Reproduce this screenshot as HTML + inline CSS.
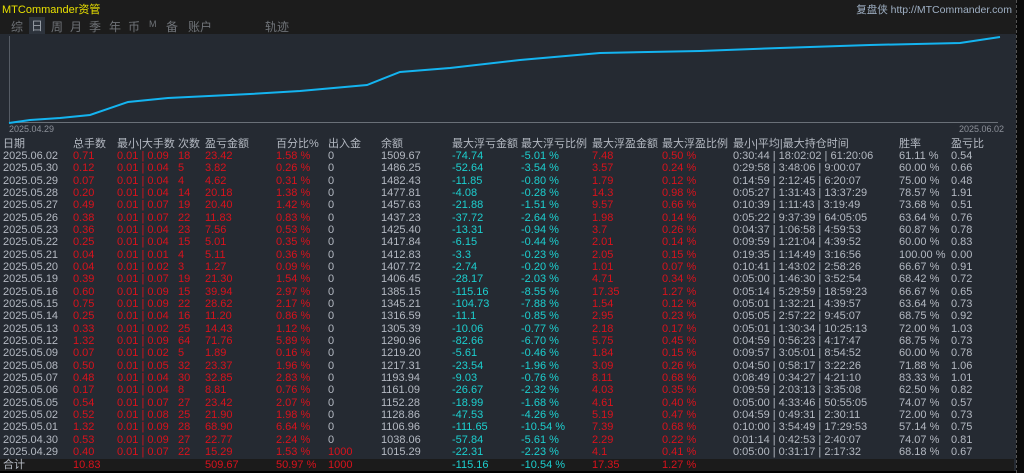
<!DOCTYPE html>
<html><head><meta charset="utf-8"><style>
*{margin:0;padding:0;box-sizing:border-box}
body{width:1024px;height:473px;overflow:hidden;background:#252a32;font-family:"Liberation Sans","Noto Sans CJK SC",sans-serif;font-size:11px;color:#b4b9c2;position:relative}
.top{position:absolute;left:0;top:0;width:1024px;height:34px;background:#1c1c1c}
.logo{position:absolute;left:2px;top:1px;font-size:11px;color:#e8e000}
.site{position:absolute;right:12px;top:2px;font-size:10.5px;color:#9fb0c4}
.tabs{position:absolute;left:11px;top:18px;font-size:12px;color:#6f7378}
.tabs span{position:absolute;top:0;white-space:nowrap}
.sel{background:#2d333c;color:#9aa0a8;padding:0 2px}
.strip{position:absolute;right:0;top:0;width:8px;height:473px;background:#0a0a0a;border-left:1px dashed #555}
.r{position:absolute;left:0;width:1014px;height:12px;line-height:12px;white-space:nowrap}
.r span{position:absolute;top:0}
.h{color:#b4b9c2;font-size:11px}
.red{color:#d9121c}.cy{color:#1ccfcf}
.tot{position:absolute;left:0;top:459px;width:1014px;height:12px;background:#1b1b1b}
.bot{position:absolute;left:0;top:471px;width:1016px;height:2px;background:#000}
</style></head><body>
<div class="top">
<div class="logo">MTCommander资管</div>
<div class="site">复盘侠 http://MTCommander.com</div>
<div class="tabs">
<span style="left:0">综</span><span class="sel" style="left:18px;top:-1px">日</span><span style="left:40px">周</span><span style="left:59px">月</span><span style="left:78px">季</span><span style="left:98px">年</span><span style="left:117px">币</span><span style="left:138px;font-size:9px;top:1px">M</span><span style="left:155px">备</span><span style="left:177px">账户</span><span style="left:254px">轨迹</span>
</div>
</div>
<svg style="position:absolute;left:0;top:34px" width="1016" height="100">
<line x1="9.5" y1="2" x2="9.5" y2="88" stroke="#555b64"/>
<line x1="9" y1="88.5" x2="998" y2="88.5" stroke="#6a7078"/>
<polyline fill="none" stroke="#14b4f0" stroke-width="2" points="9,89 30,86 60,84 90,81 128,68 168,64 250,60 300,57 367,51 400,38 450,34 520,26 600,19 700,17 780,14 870,11 960,9 1000,3"/>
</svg>
<div style="position:absolute;left:9px;top:124px;font-size:9px;color:#8c9099">2025.04.29</div>
<div style="position:absolute;left:959px;top:124px;font-size:9px;color:#8c9099">2025.06.02</div>

<div class="r h" style="top:138px"><span style="left:3px">日期</span><span style="left:73px">总手数</span><span style="left:117px">最小|大手数</span><span style="left:178px">次数</span><span style="left:205px">盈亏金额</span><span style="left:276px">百分比%</span><span style="left:328px">出入金</span><span style="left:381px">余额</span><span style="left:452px">最大浮亏金额</span><span style="left:521px">最大浮亏比例</span><span style="left:592px">最大浮盈金额</span><span style="left:662px">最大浮盈比例</span><span style="left:733px">最小|平均|最大持仓时间</span><span style="left:899px">胜率</span><span style="left:951px">盈亏比</span></div>

<div id="rows">
<div class="r" style="top:150px"><span style="left:3px">2025.06.02</span><span class="red" style="left:73px">0.71</span><span class="red" style="left:117px">0.01 | 0.09</span><span class="red" style="left:178px">18</span><span class="red" style="left:205px">23.42</span><span class="red" style="left:276px">1.58 %</span><span style="left:328px">0</span><span style="left:381px">1509.67</span><span class="cy" style="left:452px">-74.74</span><span class="cy" style="left:521px">-5.01 %</span><span class="red" style="left:592px">7.48</span><span class="red" style="left:662px">0.50 %</span><span style="left:733px">0:30:44 | 18:02:02 | 61:20:06</span><span style="left:899px">61.11 %</span><span style="left:951px">0.54</span></div>
<div class="r" style="top:162.3px"><span style="left:3px">2025.05.30</span><span class="red" style="left:73px">0.12</span><span class="red" style="left:117px">0.01 | 0.04</span><span class="red" style="left:178px">5</span><span class="red" style="left:205px">3.82</span><span class="red" style="left:276px">0.26 %</span><span style="left:328px">0</span><span style="left:381px">1486.25</span><span class="cy" style="left:452px">-52.64</span><span class="cy" style="left:521px">-3.54 %</span><span class="red" style="left:592px">3.57</span><span class="red" style="left:662px">0.24 %</span><span style="left:733px">0:29:58 | 3:48:06 | 9:00:07</span><span style="left:899px">60.00 %</span><span style="left:951px">0.66</span></div>
<div class="r" style="top:174.7px"><span style="left:3px">2025.05.29</span><span class="red" style="left:73px">0.07</span><span class="red" style="left:117px">0.01 | 0.04</span><span class="red" style="left:178px">4</span><span class="red" style="left:205px">4.62</span><span class="red" style="left:276px">0.31 %</span><span style="left:328px">0</span><span style="left:381px">1482.43</span><span class="cy" style="left:452px">-11.85</span><span class="cy" style="left:521px">-0.80 %</span><span class="red" style="left:592px">1.79</span><span class="red" style="left:662px">0.12 %</span><span style="left:733px">0:14:59 | 2:12:45 | 6:20:07</span><span style="left:899px">75.00 %</span><span style="left:951px">0.48</span></div>
<div class="r" style="top:187px"><span style="left:3px">2025.05.28</span><span class="red" style="left:73px">0.20</span><span class="red" style="left:117px">0.01 | 0.04</span><span class="red" style="left:178px">14</span><span class="red" style="left:205px">20.18</span><span class="red" style="left:276px">1.38 %</span><span style="left:328px">0</span><span style="left:381px">1477.81</span><span class="cy" style="left:452px">-4.08</span><span class="cy" style="left:521px">-0.28 %</span><span class="red" style="left:592px">14.3</span><span class="red" style="left:662px">0.98 %</span><span style="left:733px">0:05:27 | 1:31:43 | 13:37:29</span><span style="left:899px">78.57 %</span><span style="left:951px">1.91</span></div>
<div class="r" style="top:199.3px"><span style="left:3px">2025.05.27</span><span class="red" style="left:73px">0.49</span><span class="red" style="left:117px">0.01 | 0.07</span><span class="red" style="left:178px">19</span><span class="red" style="left:205px">20.40</span><span class="red" style="left:276px">1.42 %</span><span style="left:328px">0</span><span style="left:381px">1457.63</span><span class="cy" style="left:452px">-21.88</span><span class="cy" style="left:521px">-1.51 %</span><span class="red" style="left:592px">9.57</span><span class="red" style="left:662px">0.66 %</span><span style="left:733px">0:10:39 | 1:11:43 | 3:19:49</span><span style="left:899px">73.68 %</span><span style="left:951px">0.51</span></div>
<div class="r" style="top:211.7px"><span style="left:3px">2025.05.26</span><span class="red" style="left:73px">0.38</span><span class="red" style="left:117px">0.01 | 0.07</span><span class="red" style="left:178px">22</span><span class="red" style="left:205px">11.83</span><span class="red" style="left:276px">0.83 %</span><span style="left:328px">0</span><span style="left:381px">1437.23</span><span class="cy" style="left:452px">-37.72</span><span class="cy" style="left:521px">-2.64 %</span><span class="red" style="left:592px">1.98</span><span class="red" style="left:662px">0.14 %</span><span style="left:733px">0:05:22 | 9:37:39 | 64:05:05</span><span style="left:899px">63.64 %</span><span style="left:951px">0.76</span></div>
<div class="r" style="top:224px"><span style="left:3px">2025.05.23</span><span class="red" style="left:73px">0.36</span><span class="red" style="left:117px">0.01 | 0.04</span><span class="red" style="left:178px">23</span><span class="red" style="left:205px">7.56</span><span class="red" style="left:276px">0.53 %</span><span style="left:328px">0</span><span style="left:381px">1425.40</span><span class="cy" style="left:452px">-13.31</span><span class="cy" style="left:521px">-0.94 %</span><span class="red" style="left:592px">3.7</span><span class="red" style="left:662px">0.26 %</span><span style="left:733px">0:04:37 | 1:06:58 | 4:59:53</span><span style="left:899px">60.87 %</span><span style="left:951px">0.78</span></div>
<div class="r" style="top:236.3px"><span style="left:3px">2025.05.22</span><span class="red" style="left:73px">0.25</span><span class="red" style="left:117px">0.01 | 0.04</span><span class="red" style="left:178px">15</span><span class="red" style="left:205px">5.01</span><span class="red" style="left:276px">0.35 %</span><span style="left:328px">0</span><span style="left:381px">1417.84</span><span class="cy" style="left:452px">-6.15</span><span class="cy" style="left:521px">-0.44 %</span><span class="red" style="left:592px">2.01</span><span class="red" style="left:662px">0.14 %</span><span style="left:733px">0:09:59 | 1:21:04 | 4:39:52</span><span style="left:899px">60.00 %</span><span style="left:951px">0.83</span></div>
<div class="r" style="top:248.7px"><span style="left:3px">2025.05.21</span><span class="red" style="left:73px">0.04</span><span class="red" style="left:117px">0.01 | 0.01</span><span class="red" style="left:178px">4</span><span class="red" style="left:205px">5.11</span><span class="red" style="left:276px">0.36 %</span><span style="left:328px">0</span><span style="left:381px">1412.83</span><span class="cy" style="left:452px">-3.3</span><span class="cy" style="left:521px">-0.23 %</span><span class="red" style="left:592px">2.05</span><span class="red" style="left:662px">0.15 %</span><span style="left:733px">0:19:35 | 1:14:49 | 3:16:56</span><span style="left:899px">100.00 %</span><span style="left:951px">0.00</span></div>
<div class="r" style="top:261px"><span style="left:3px">2025.05.20</span><span class="red" style="left:73px">0.04</span><span class="red" style="left:117px">0.01 | 0.02</span><span class="red" style="left:178px">3</span><span class="red" style="left:205px">1.27</span><span class="red" style="left:276px">0.09 %</span><span style="left:328px">0</span><span style="left:381px">1407.72</span><span class="cy" style="left:452px">-2.74</span><span class="cy" style="left:521px">-0.20 %</span><span class="red" style="left:592px">1.01</span><span class="red" style="left:662px">0.07 %</span><span style="left:733px">0:10:41 | 1:43:02 | 2:58:26</span><span style="left:899px">66.67 %</span><span style="left:951px">0.91</span></div>
<div class="r" style="top:273.3px"><span style="left:3px">2025.05.19</span><span class="red" style="left:73px">0.39</span><span class="red" style="left:117px">0.01 | 0.07</span><span class="red" style="left:178px">19</span><span class="red" style="left:205px">21.30</span><span class="red" style="left:276px">1.54 %</span><span style="left:328px">0</span><span style="left:381px">1406.45</span><span class="cy" style="left:452px">-28.17</span><span class="cy" style="left:521px">-2.03 %</span><span class="red" style="left:592px">4.71</span><span class="red" style="left:662px">0.34 %</span><span style="left:733px">0:05:00 | 1:46:30 | 3:52:54</span><span style="left:899px">68.42 %</span><span style="left:951px">0.72</span></div>
<div class="r" style="top:285.7px"><span style="left:3px">2025.05.16</span><span class="red" style="left:73px">0.60</span><span class="red" style="left:117px">0.01 | 0.09</span><span class="red" style="left:178px">15</span><span class="red" style="left:205px">39.94</span><span class="red" style="left:276px">2.97 %</span><span style="left:328px">0</span><span style="left:381px">1385.15</span><span class="cy" style="left:452px">-115.16</span><span class="cy" style="left:521px">-8.55 %</span><span class="red" style="left:592px">17.35</span><span class="red" style="left:662px">1.27 %</span><span style="left:733px">0:05:14 | 5:29:59 | 18:59:23</span><span style="left:899px">66.67 %</span><span style="left:951px">0.65</span></div>
<div class="r" style="top:298px"><span style="left:3px">2025.05.15</span><span class="red" style="left:73px">0.75</span><span class="red" style="left:117px">0.01 | 0.09</span><span class="red" style="left:178px">22</span><span class="red" style="left:205px">28.62</span><span class="red" style="left:276px">2.17 %</span><span style="left:328px">0</span><span style="left:381px">1345.21</span><span class="cy" style="left:452px">-104.73</span><span class="cy" style="left:521px">-7.88 %</span><span class="red" style="left:592px">1.54</span><span class="red" style="left:662px">0.12 %</span><span style="left:733px">0:05:01 | 1:32:21 | 4:39:57</span><span style="left:899px">63.64 %</span><span style="left:951px">0.73</span></div>
<div class="r" style="top:310.3px"><span style="left:3px">2025.05.14</span><span class="red" style="left:73px">0.25</span><span class="red" style="left:117px">0.01 | 0.04</span><span class="red" style="left:178px">16</span><span class="red" style="left:205px">11.20</span><span class="red" style="left:276px">0.86 %</span><span style="left:328px">0</span><span style="left:381px">1316.59</span><span class="cy" style="left:452px">-11.1</span><span class="cy" style="left:521px">-0.85 %</span><span class="red" style="left:592px">2.95</span><span class="red" style="left:662px">0.23 %</span><span style="left:733px">0:05:05 | 2:57:22 | 9:45:07</span><span style="left:899px">68.75 %</span><span style="left:951px">0.92</span></div>
<div class="r" style="top:322.7px"><span style="left:3px">2025.05.13</span><span class="red" style="left:73px">0.33</span><span class="red" style="left:117px">0.01 | 0.02</span><span class="red" style="left:178px">25</span><span class="red" style="left:205px">14.43</span><span class="red" style="left:276px">1.12 %</span><span style="left:328px">0</span><span style="left:381px">1305.39</span><span class="cy" style="left:452px">-10.06</span><span class="cy" style="left:521px">-0.77 %</span><span class="red" style="left:592px">2.18</span><span class="red" style="left:662px">0.17 %</span><span style="left:733px">0:05:01 | 1:30:34 | 10:25:13</span><span style="left:899px">72.00 %</span><span style="left:951px">1.03</span></div>
<div class="r" style="top:335px"><span style="left:3px">2025.05.12</span><span class="red" style="left:73px">1.32</span><span class="red" style="left:117px">0.01 | 0.09</span><span class="red" style="left:178px">64</span><span class="red" style="left:205px">71.76</span><span class="red" style="left:276px">5.89 %</span><span style="left:328px">0</span><span style="left:381px">1290.96</span><span class="cy" style="left:452px">-82.66</span><span class="cy" style="left:521px">-6.70 %</span><span class="red" style="left:592px">5.75</span><span class="red" style="left:662px">0.45 %</span><span style="left:733px">0:04:59 | 0:56:23 | 4:17:47</span><span style="left:899px">68.75 %</span><span style="left:951px">0.73</span></div>
<div class="r" style="top:347.3px"><span style="left:3px">2025.05.09</span><span class="red" style="left:73px">0.07</span><span class="red" style="left:117px">0.01 | 0.02</span><span class="red" style="left:178px">5</span><span class="red" style="left:205px">1.89</span><span class="red" style="left:276px">0.16 %</span><span style="left:328px">0</span><span style="left:381px">1219.20</span><span class="cy" style="left:452px">-5.61</span><span class="cy" style="left:521px">-0.46 %</span><span class="red" style="left:592px">1.84</span><span class="red" style="left:662px">0.15 %</span><span style="left:733px">0:09:57 | 3:05:01 | 8:54:52</span><span style="left:899px">60.00 %</span><span style="left:951px">0.78</span></div>
<div class="r" style="top:359.7px"><span style="left:3px">2025.05.08</span><span class="red" style="left:73px">0.50</span><span class="red" style="left:117px">0.01 | 0.05</span><span class="red" style="left:178px">32</span><span class="red" style="left:205px">23.37</span><span class="red" style="left:276px">1.96 %</span><span style="left:328px">0</span><span style="left:381px">1217.31</span><span class="cy" style="left:452px">-23.54</span><span class="cy" style="left:521px">-1.96 %</span><span class="red" style="left:592px">3.09</span><span class="red" style="left:662px">0.26 %</span><span style="left:733px">0:04:50 | 0:58:17 | 3:22:26</span><span style="left:899px">71.88 %</span><span style="left:951px">1.06</span></div>
<div class="r" style="top:372px"><span style="left:3px">2025.05.07</span><span class="red" style="left:73px">0.48</span><span class="red" style="left:117px">0.01 | 0.04</span><span class="red" style="left:178px">30</span><span class="red" style="left:205px">32.85</span><span class="red" style="left:276px">2.83 %</span><span style="left:328px">0</span><span style="left:381px">1193.94</span><span class="cy" style="left:452px">-9.03</span><span class="cy" style="left:521px">-0.76 %</span><span class="red" style="left:592px">8.11</span><span class="red" style="left:662px">0.68 %</span><span style="left:733px">0:08:49 | 0:34:27 | 4:21:10</span><span style="left:899px">83.33 %</span><span style="left:951px">1.01</span></div>
<div class="r" style="top:384.3px"><span style="left:3px">2025.05.06</span><span class="red" style="left:73px">0.17</span><span class="red" style="left:117px">0.01 | 0.04</span><span class="red" style="left:178px">8</span><span class="red" style="left:205px">8.81</span><span class="red" style="left:276px">0.76 %</span><span style="left:328px">0</span><span style="left:381px">1161.09</span><span class="cy" style="left:452px">-26.67</span><span class="cy" style="left:521px">-2.32 %</span><span class="red" style="left:592px">4.03</span><span class="red" style="left:662px">0.35 %</span><span style="left:733px">0:09:59 | 2:03:13 | 3:35:08</span><span style="left:899px">62.50 %</span><span style="left:951px">0.82</span></div>
<div class="r" style="top:396.7px"><span style="left:3px">2025.05.05</span><span class="red" style="left:73px">0.54</span><span class="red" style="left:117px">0.01 | 0.07</span><span class="red" style="left:178px">27</span><span class="red" style="left:205px">23.42</span><span class="red" style="left:276px">2.07 %</span><span style="left:328px">0</span><span style="left:381px">1152.28</span><span class="cy" style="left:452px">-18.99</span><span class="cy" style="left:521px">-1.68 %</span><span class="red" style="left:592px">4.61</span><span class="red" style="left:662px">0.40 %</span><span style="left:733px">0:05:00 | 4:33:46 | 50:55:05</span><span style="left:899px">74.07 %</span><span style="left:951px">0.57</span></div>
<div class="r" style="top:409px"><span style="left:3px">2025.05.02</span><span class="red" style="left:73px">0.52</span><span class="red" style="left:117px">0.01 | 0.08</span><span class="red" style="left:178px">25</span><span class="red" style="left:205px">21.90</span><span class="red" style="left:276px">1.98 %</span><span style="left:328px">0</span><span style="left:381px">1128.86</span><span class="cy" style="left:452px">-47.53</span><span class="cy" style="left:521px">-4.26 %</span><span class="red" style="left:592px">5.19</span><span class="red" style="left:662px">0.47 %</span><span style="left:733px">0:04:59 | 0:49:31 | 2:30:11</span><span style="left:899px">72.00 %</span><span style="left:951px">0.73</span></div>
<div class="r" style="top:421.3px"><span style="left:3px">2025.05.01</span><span class="red" style="left:73px">1.32</span><span class="red" style="left:117px">0.01 | 0.09</span><span class="red" style="left:178px">28</span><span class="red" style="left:205px">68.90</span><span class="red" style="left:276px">6.64 %</span><span style="left:328px">0</span><span style="left:381px">1106.96</span><span class="cy" style="left:452px">-111.65</span><span class="cy" style="left:521px">-10.54 %</span><span class="red" style="left:592px">7.39</span><span class="red" style="left:662px">0.68 %</span><span style="left:733px">0:10:00 | 3:54:49 | 17:29:53</span><span style="left:899px">57.14 %</span><span style="left:951px">0.75</span></div>
<div class="r" style="top:433.7px"><span style="left:3px">2025.04.30</span><span class="red" style="left:73px">0.53</span><span class="red" style="left:117px">0.01 | 0.09</span><span class="red" style="left:178px">27</span><span class="red" style="left:205px">22.77</span><span class="red" style="left:276px">2.24 %</span><span style="left:328px">0</span><span style="left:381px">1038.06</span><span class="cy" style="left:452px">-57.84</span><span class="cy" style="left:521px">-5.61 %</span><span class="red" style="left:592px">2.29</span><span class="red" style="left:662px">0.22 %</span><span style="left:733px">0:01:14 | 0:42:53 | 2:40:07</span><span style="left:899px">74.07 %</span><span style="left:951px">0.81</span></div>
<div class="r" style="top:446px"><span style="left:3px">2025.04.29</span><span class="red" style="left:73px">0.40</span><span class="red" style="left:117px">0.01 | 0.07</span><span class="red" style="left:178px">22</span><span class="red" style="left:205px">15.29</span><span class="red" style="left:276px">1.53 %</span><span class="red" style="left:328px">1000</span><span style="left:381px">1015.29</span><span class="cy" style="left:452px">-22.31</span><span class="cy" style="left:521px">-2.23 %</span><span class="red" style="left:592px">4.1</span><span class="red" style="left:662px">0.41 %</span><span style="left:733px">0:05:00 | 0:31:17 | 2:17:32</span><span style="left:899px">68.18 %</span><span style="left:951px">0.67</span></div>
</div>
<div class="tot"></div>
<div class="r" style="top:459px"><span style="left:3px">合计</span><span class="red" style="left:73px">10.83</span><span class="red" style="left:205px">509.67</span><span class="red" style="left:276px">50.97 %</span><span class="red" style="left:328px">1000</span><span class="cy" style="left:452px">-115.16</span><span class="cy" style="left:521px">-10.54 %</span><span class="red" style="left:592px">17.35</span><span class="red" style="left:662px">1.27 %</span></div>
<div class="bot"></div>
<div class="strip"></div>
</body></html>
